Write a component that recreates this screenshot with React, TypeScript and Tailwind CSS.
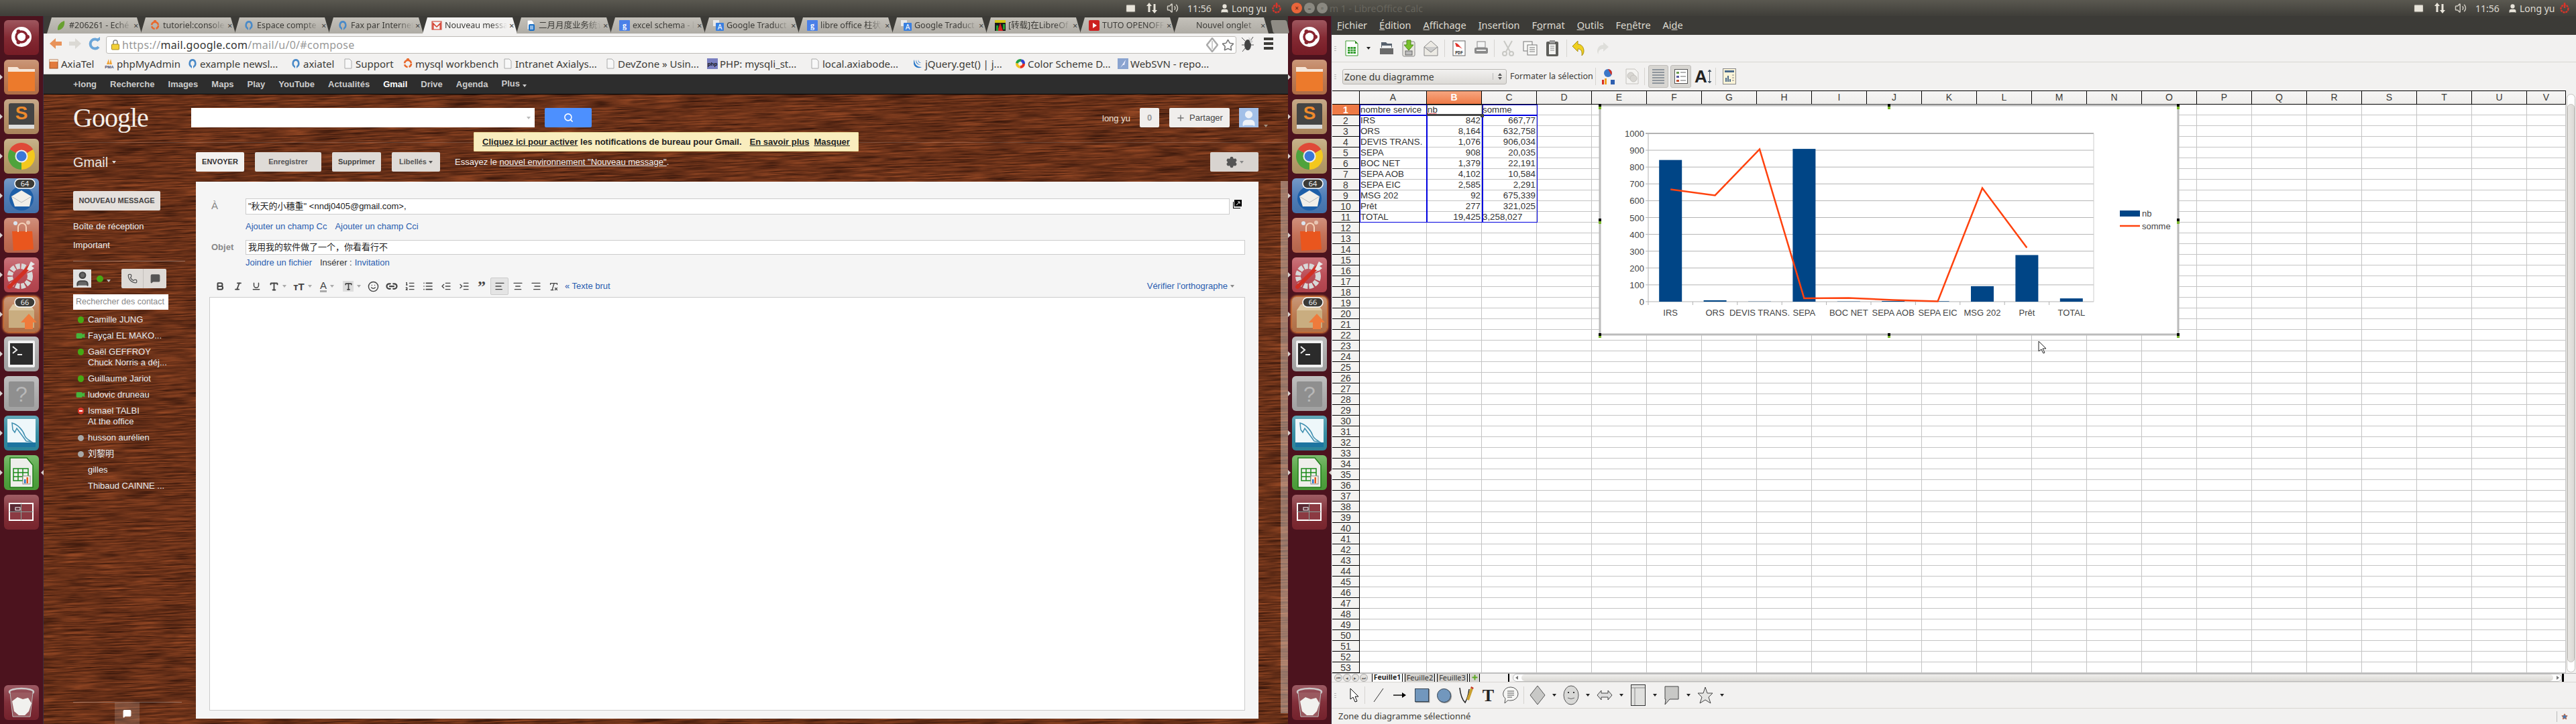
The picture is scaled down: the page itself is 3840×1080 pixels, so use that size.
import type { ReactNode } from "react";
import {
  AlignCenter,
  AlignLeft,
  AlignRight,
  Bold,
  Indent,
  Italic,
  Link2,
  List,
  ListOrdered,
  Mail,
  MessageSquare,
  Outdent,
  Phone,
  Plus,
  RemoveFormatting,
  Search,
  Settings,
  Smile,
  Star,
  Type,
  Underline,
  User,
  Video,
  Volume2,
} from "lucide-react";

const UI_FONT = "font-['Noto_Sans','Noto_Sans_CJK_SC',sans-serif]";
const WEB_FONT = "font-['Liberation_Sans','Noto_Sans_CJK_SC',sans-serif]";

function Caret({ color = "border-t-[#777]" }: { color?: string }) {
  return <span className={`inline-block h-0 w-0 border-x-[3px] border-t-[4px] border-x-transparent ${color}`} />;
}

/* ---------- top panel ---------- */

function Indicators() {
  return (
    <div className="ml-auto flex items-center pr-[8px] text-[14px] text-[#dfdbd2]">
      <Mail size={17} className="mr-[14px] fill-[#e8e4da] stroke-[#55534c]" />
      <svg width="18" height="18" viewBox="0 0 18 18" className="mr-[13px] fill-[#e8e4da]">
        <path d="M5 1 9 6H6.500v9h-3V6H1zM13 17l4-5h-2.500V3h-3v9H9z" />
      </svg>
      <Volume2 size={18} className="mr-[13px] stroke-[#cfcbc2]" />
      <span className="mr-[11px] w-[37px]">11:56</span>
      <User size={15} className="mr-[3px] fill-[#e8e4da] stroke-[#e8e4da]" />
      <span className="w-[58px] whitespace-nowrap">Long yu</span>
      <svg width="18" height="18" viewBox="0 0 18 18" fill="none" className="stroke-[#d8342a]" strokeWidth="2.400">
        <circle cx="9" cy="10" r="5.500" strokeDasharray="3 1" />
        <path d="M9 1v8" />
      </svg>
    </div>
  );
}

function WindowButtons() {
  return (
    <div className="ml-[4px] flex items-center gap-[3px] pl-[1px]">
      <span className="flex h-[16px] w-[16px] items-center justify-center rounded-full bg-[#e9653a] text-[10px] leading-none text-[#5a2010]">×</span>
      <span className="flex h-[16px] w-[16px] items-center justify-center rounded-full bg-[#8a8880] text-[10px] leading-none text-[#3c3b37]">–</span>
      <span className="flex h-[16px] w-[16px] items-center justify-center rounded-full bg-[#8a8880] text-[9px] leading-none text-[#3c3b37]">▫</span>
    </div>
  );
}

function TopPanel() {
  return (
    <div className={`${UI_FONT} flex h-6 bg-gradient-to-b from-[#5a5850] to-[#3f3e39]`}>
      <div className="flex w-[1920px]">
        <Indicators />
      </div>
      <div className="flex w-[1920px] items-center">
        <WindowButtons />
        <span className="ml-[3px] text-[14px] text-[#67655d]">m 1 - LibreOffice Calc</span>
        <Indicators />
      </div>
    </div>
  );
}

/* ---------- launcher ---------- */

function Tile({
  tone,
  pip = false,
  active = false,
  children,
}: {
  tone: string;
  pip?: boolean;
  active?: boolean;
  children: ReactNode;
}) {
  return (
    <div className={`relative h-[52px] w-[52px] shrink-0 rounded-[6px] ${tone}`}>
      <div className="absolute inset-0 rounded-[6px] bg-gradient-to-b from-white/25 via-white/5 to-black/5" />
      {pip && (
        <span className="absolute top-[22px] -left-[6px] h-0 w-0 border-y-[4px] border-l-[4px] border-y-transparent border-l-[#d8d2d0]" />
      )}
      {active && (
        <span className="absolute top-[22px] -right-[7px] h-0 w-0 border-y-[4px] border-r-[4px] border-y-transparent border-r-[#d8d2d0]" />
      )}
      <svg viewBox="0 0 52 52" className="absolute inset-0 h-full w-full">
        {children}
      </svg>
    </div>
  );
}

function Badge({ n }: { n: string }) {
  return (
    <g>
      <rect x="16" y="1" width="30" height="14" rx="7" fill="#3c3b37" stroke="#fff" strokeWidth="1.500" />
      <text x="31" y="12" textAnchor="middle" fontSize="11" fill="#eee" fontFamily="Noto Sans">
        {n}
      </text>
    </g>
  );
}

function Launcher() {
  return (
    <div className={`${UI_FONT} flex h-full w-[65px] shrink-0 flex-col items-center gap-[7px] border-r border-[#3c2a40] bg-[#4c131e] pt-[6px] pb-[6px]`}>
      <Tile tone="bg-[#7e1f29]">
        <circle cx="26" cy="25" r="15" fill="#fff" />
        <circle cx="26" cy="25" r="8" fill="none" stroke="#8a2530" strokeWidth="3.500" />
        <circle cx="35" cy="25" r="3" fill="#8a2530" />
        <circle cx="21.500" cy="17" r="3" fill="#8a2530" />
        <circle cx="21.500" cy="33" r="3" fill="#8a2530" />
      </Tile>
      <Tile tone="bg-[#b9744c]" pip>
        <path d="M6 11h14l3 3h23v33H6z" fill="#f6e6d8" />
        <path d="M6 18h40v29H6z" fill="#ec7a2c" />
      </Tile>
      <Tile tone="bg-[#b38c62]" pip>
        <rect x="7" y="6" width="38" height="38" rx="3" fill="#444" />
        <rect x="7" y="38" width="38" height="6" fill="#ddd" />
        <text x="26" y="30" textAnchor="middle" fontSize="28" fontWeight="700" fill="#ee8a2c" fontFamily="Liberation Sans">
          S
        </text>
      </Tile>
      <Tile tone="bg-[#b59a66]" pip>
        <path d="M8.700 16A20 20 0 0 1 43.300 16L26 26Z" fill="#df4a38" />
        <path d="M43.300 16A20 20 0 0 1 26 46L26 26Z" fill="#f3c81e" />
        <path d="M26 46A20 20 0 0 1 8.700 16L26 26Z" fill="#4ea33c" />
        <circle cx="26" cy="26" r="9.500" fill="#eee" />
        <circle cx="26" cy="26" r="7.500" fill="#3b78d8" />
      </Tile>
      <Tile tone="bg-[#4878b4]" pip>
        <circle cx="26" cy="30" r="18" fill="#1d5fa8" />
        <path d="M11 27 26 18l15 9-3 15H16z" fill="#f1efe9" />
        <path d="M11 27l15 9 15-9" fill="none" stroke="#bbb" />
        <Badge n="64" />
      </Tile>
      <Tile tone="bg-[#c06a50]" pip>
        <path d="M12 20h30l2 27-30 2z" fill="#e9561e" />
        <path d="M21 21v-7a6 6 0 0 1 12 0v7" fill="none" stroke="#f6d2b8" strokeWidth="2" />
        <circle cx="17" cy="8" r="3" fill="#dbe4ef" />
        <circle cx="36" cy="7" r="3" fill="#e8c6b4" />
      </Tile>
      <Tile tone="bg-[#b84650]" pip>
        <circle cx="24" cy="28" r="15" fill="none" stroke="#d8d8d8" strokeWidth="8" strokeDasharray="6 2" />
        <path d="M8 44 38 14" stroke="#d22f22" strokeWidth="6" strokeLinecap="round" />
        <path d="M34 18 40 6l6 4-5 3 4 3-5 4z" fill="#e8e8e8" />
      </Tile>
      <div className="rounded-[7px] shadow-[0_0_3px_2px_#e0803c]">
        <Tile tone="bg-[#b8764c]" pip>
          <path d="M7 20h38v26H7z" fill="#c9ad80" />
          <path d="M7 20 13 11h26l6 9z" fill="#dcc7a2" />
          <path d="M37 25l12 13h-6v10H31V38h-6z" fill="#ef7b3c" />
          <Badge n="66" />
        </Tile>
      </div>
      <Tile tone="bg-[#a8a8a8]" pip>
        <rect x="6" y="6" width="40" height="40" rx="2" fill="#f0f0f0" />
        <rect x="9" y="10" width="34" height="32" fill="#2b2b2b" />
        <path d="M13 15l6 5-6 5" fill="none" stroke="#eee" strokeWidth="2" />
        <path d="M20 27h7" stroke="#eee" strokeWidth="2" />
      </Tile>
      <Tile tone="bg-[#aaaaaa]" pip>
        <rect x="7" y="8" width="38" height="38" rx="2" fill="#8f8f8f" />
        <text x="26" y="38" textAnchor="middle" fontSize="32" fill="#b8b8b8" fontFamily="Liberation Sans">
          ?
        </text>
      </Tile>
      <Tile tone="bg-[#2f8aa0]" pip>
        <rect x="5" y="5" width="42" height="42" fill="#eef7fa" />
        <path d="M12 11c8 2 16 10 19 19 2 5 6 6 10 9l-8-1-5-7-9-12-3 6-3-4z" fill="none" stroke="#3f8fb0" strokeWidth="1.500" />
        <rect x="5" y="40" width="42" height="7" fill="#1d74a0" />
      </Tile>
      <Tile tone="bg-[#4ea33c]" pip active>
        <path d="M9 4h25l9 11v33H9z" fill="#eeeeea" stroke="#207d19" strokeWidth="1.500" />
        <path d="M14 20h22v18H14zM14 26h22M14 32h22M21 20v18M28 20v18" fill="none" stroke="#1a8a1a" strokeWidth="1.500" />
        <rect x="28" y="31" width="11" height="12" fill="#f6f2e8" stroke="#888" />
        <rect x="30" y="36" width="2.500" height="6" fill="#2a78d0" />
        <rect x="33.500" y="33" width="2.500" height="9" fill="#e85a20" />
      </Tile>
      <Tile tone="bg-[#7e2730]">
        <rect x="8" y="13" width="35" height="25" fill="#8b3a42" stroke="#fff" strokeWidth="2" />
        <path d="M25.500 13v25M8 25.500h35" stroke="#89a09a" />
        <rect x="9" y="14" width="16" height="11" fill="#5a2a34" />
        <rect x="17" y="19" width="7" height="4" fill="none" stroke="#fff" />
      </Tile>
      <div className="mt-auto">
        <Tile tone="bg-[#7b2530]">
          <ellipse cx="26" cy="10" rx="18" ry="5" fill="none" stroke="#ccc" strokeWidth="2.500" />
          <path d="M9 11l4 36h26l4-36" fill="#9a5a60" stroke="#bbb" />
          <path d="M12 24l8-6 8 3 8-2 5 8-4 12-6 6h-9l-7-6z" fill="#f1f1ee" />
        </Tile>
      </div>
    </div>
  );
}

/* ---------- chrome ---------- */

type Fav = "leaf" | "ubuntu" | "axia" | "gmail" | "doc" | "google" | "translate" | "bars" | "play" | "none" | "page" | "pma" | "box" | "php" | "jquery" | "color" | "svn";

function Favicon({ kind }: { kind: Fav }) {
  if (kind === "none") return <span className="w-[16px] shrink-0" />;
  return (
    <svg width="16" height="16" viewBox="0 0 16 16" className="shrink-0">
      {kind === "leaf" && <path d="M3 15C2 8 7 3 13 1c1 7-2 13-10 14z" fill="#68a030" />}
      {kind === "ubuntu" && (
        <g fill="none" stroke="#e8682c" strokeWidth="2.500">
          <circle cx="8" cy="8" r="5" strokeDasharray="6 2" />
          <circle cx="8" cy="2" r="1" />
        </g>
      )}
      {kind === "axia" && <path d="M8 1a5.500 6.500 0 0 0-3 12l2 2v-3.500A3 4 0 1 1 9 11.500V15l2-2A5.500 6.500 0 0 0 8 1z" fill="#4a8ac8" />}
      {kind === "gmail" && (
        <g>
          <rect x="1" y="2" width="14" height="12" fill="#f4f4f4" stroke="#cc3322" />
          <path d="M1.500 2.500 8 9l6.500-6.500V14h-2V7L8 11 3.500 7v7h-2z" fill="#d44030" />
        </g>
      )}
      {kind === "doc" && (
        <g>
          <path d="M3 0h7l3 4v10H3z" fill="#fff" stroke="#aaa" />
          <rect x="5" y="6" width="9" height="10" rx="2" fill="#1a6fc4" />
          <path d="M7 9h5M7 11h5M7 13h5" stroke="#fff" />
        </g>
      )}
      {kind === "google" && (
        <g>
          <rect width="16" height="16" rx="1" fill="#4a80e8" />
          <text x="8" y="12" textAnchor="middle" fontSize="12" fontWeight="700" fill="#fff" fontFamily="Liberation Serif">
            g
          </text>
        </g>
      )}
      {kind === "translate" && (
        <g>
          <rect x="0" y="0" width="9" height="9" fill="#e8e8e8" />
          <rect x="4" y="4" width="12" height="12" rx="1" fill="#3a80e0" />
          <text x="10" y="14" textAnchor="middle" fontSize="10" fill="#fff" fontFamily="Liberation Sans">
            A
          </text>
        </g>
      )}
      {kind === "bars" && (
        <g>
          <rect width="16" height="16" fill="#1a1a1a" />
          <path d="M0 0h16v4H0z" fill="#d4c818" />
          <path d="M4 16 8 4l4 12z" fill="#d82020" />
          <path d="M2 8h3v8H2zM12 6h3v8h-3z" fill="#20a030" />
        </g>
      )}
      {kind === "play" && (
        <g>
          <rect width="16" height="16" rx="2" fill="#cc2020" />
          <path d="M6 4l6 4-6 4z" fill="#fff" />
        </g>
      )}
      {kind === "page" && <path d="M3 1h7l3 3v11H3z" fill="#f8f8f8" stroke="#aaa" />}
      {kind === "pma" && (
        <g>
          <path d="M4 9 7 1l1 8zM8 9l2-8 2 8z" fill="#f0a030" />
          <text x="8" y="15" textAnchor="middle" fontSize="6" fontWeight="700" fill="#446" fontFamily="Liberation Sans">
            PMA
          </text>
        </g>
      )}
      {kind === "box" && (
        <g>
          <rect x="2" y="2" width="12" height="13" fill="#e27a3c" stroke="#a05020" />
          <rect x="2" y="2" width="12" height="3" fill="#f4e0c8" />
        </g>
      )}
      {kind === "php" && (
        <g>
          <rect width="16" height="16" fill="#7a7fc0" />
          <text x="8" y="11" textAnchor="middle" fontSize="8" fontWeight="700" fill="#111" fontFamily="Liberation Sans">
            php
          </text>
        </g>
      )}
      {kind === "jquery" && <path d="M3 2c0 6 3 11 11 11-5 3-12 0-12-6 0-2 0-4 1-5zm3 0c0 4 2 7 7 8-5 0-9-3-7-8zm3 0c0 2 1 4 4 5-3 0-5-2-4-5z" fill="#2a78c8" />}
      {kind === "color" && (
        <g fill="none" strokeWidth="4">
          <circle cx="8" cy="8" r="5" stroke="#e83020" strokeDasharray="8 24" />
          <circle cx="8" cy="8" r="5" stroke="#f0c020" strokeDasharray="8 24" strokeDashoffset="-8" />
          <circle cx="8" cy="8" r="5" stroke="#20a040" strokeDasharray="8 24" strokeDashoffset="-16" />
          <circle cx="8" cy="8" r="5" stroke="#3040d0" strokeDasharray="8 24" strokeDashoffset="-24" />
        </g>
      )}
      {kind === "svn" && (
        <g>
          <rect width="16" height="16" fill="#8aa4d0" />
          <path d="M4 14 12 2l-2 8-2 0z" fill="#eef" />
        </g>
      )}
    </svg>
  );
}

const TABS: { title: string; icon: Fav; active?: boolean }[] = [
  { title: "#206261 - Eché", icon: "leaf" },
  { title: "tutoriel:console", icon: "ubuntu" },
  { title: "Espace compte", icon: "axia" },
  { title: "Fax par Internet", icon: "axia" },
  { title: "Nouveau messa", icon: "gmail", active: true },
  { title: "二月月度业务统计", icon: "doc" },
  { title: "excel schema - l", icon: "google" },
  { title: "Google Traduct", icon: "translate" },
  { title: "libre office 柱状", icon: "google" },
  { title: "Google Traduct", icon: "translate" },
  { title: "[转载]在LibreOf", icon: "bars" },
  { title: "TUTO OPENOFF", icon: "play" },
  { title: "Nouvel onglet", icon: "none" },
];

const BOOKMARKS: { label: string; icon: Fav; width: string }[] = [
  { label: "AxiaTel", icon: "box", width: "w-[83px]" },
  { label: "phpMyAdmin", icon: "pma", width: "w-[124px]" },
  { label: "example newsl...", icon: "axia", width: "w-[154px]" },
  { label: "axiatel", icon: "axia", width: "w-[78px]" },
  { label: "Support", icon: "page", width: "w-[89px]" },
  { label: "mysql workbench", icon: "ubuntu", width: "w-[149px]" },
  { label: "Intranet Axialys...", icon: "page", width: "w-[153px]" },
  { label: "DevZone » Usin...", icon: "page", width: "w-[152px]" },
  { label: "PHP: mysqli_st...", icon: "php", width: "w-[153px]" },
  { label: "local.axiabode...", icon: "page", width: "w-[153px]" },
  { label: "jQuery.get() | j...", icon: "jquery", width: "w-[153px]" },
  { label: "Color Scheme D...", icon: "color", width: "w-[153px]" },
  { label: "WebSVN - repo...", icon: "svn", width: "w-[153px]" },
];

const NAV = ["+long", "Recherche", "Images", "Maps", "Play", "YouTube", "Actualités", "Gmail", "Drive", "Agenda", "Plus"];

function ChromeBars() {
  return (
    <div className={UI_FONT}>
      <div className="flex h-[26px] items-end bg-[#3c3b37] pl-[5px]">
        {TABS.map((t, i) => (
          <div
            key={i}
            className={`flex h-[24px] w-[141px] shrink-0 -mr-[1px] items-center pl-[13px] [clip-path:polygon(7px_0,calc(100%-7px)_0,100%_100%,0_100%)] ${
              t.active ? "bg-[#f2f1f0]" : "bg-gradient-to-b from-[#c4c1ba] to-[#aeaba4]"
            }`}
          >
            <Favicon kind={t.icon} />
            <span className="ml-[4px] w-[93px] shrink-0 text-[12.5px] leading-[24px] whitespace-nowrap text-[#3c3b37] [mask-image:linear-gradient(to_right,#000_75%,transparent)]">
              {t.title}
            </span>
            <span className="ml-[3px] text-[13px] leading-none text-[#444]">×</span>
          </div>
        ))}
        <div className="ml-[6px] h-[20px] w-[24px] skew-x-12 rounded-[3px] bg-[#8f8c85]" />
      </div>
      <div className="flex h-[30px] items-center bg-[#f2f1f0]">
        <svg width="20" height="18" viewBox="0 0 20 18" className="ml-[8px]">
          <path d="M10 1 1 9l9 8v-5h9V6h-9z" fill="#e8935a" />
        </svg>
        <svg width="20" height="18" viewBox="0 0 20 18" className="ml-[9px]">
          <path d="M10 1l9 8-9 8v-5H1V6h9z" fill="#dbd9d4" />
        </svg>
        <svg width="18" height="20" viewBox="0 0 18 20" fill="none" className="ml-[10px]">
          <path d="M15 6a7 7 0 1 0 0 9" stroke="#6ca6d8" strokeWidth="4" />
          <path d="M10 5h7V0z" fill="#6ca6d8" />
        </svg>
        <div className="mt-[4px] ml-[8px] flex h-[26px] w-[1685px] items-center rounded-[3px] border border-[#bdbbb6] bg-white">
          <svg width="14" height="16" viewBox="0 0 14 16" className="ml-[6px]">
            <path d="M4 7V4a3 3 0 0 1 6 0v3" fill="none" stroke="#888" strokeWidth="1.500" />
            <rect x="1.500" y="7" width="11" height="8" rx="1" fill="#f2d038" stroke="#a58a20" />
          </svg>
          <span className="ml-[3px] text-[16px] tracking-[0.3px] text-[#999]">
            https://<span className="text-[#333]">mail.google.com</span>/mail/u/0/#compose
          </span>
          <svg width="18" height="22" viewBox="0 0 18 22" className="mr-[5px] ml-auto">
            <path d="M9 1l8 10-8 10-8-10z" fill="none" stroke="#aaa" strokeWidth="2.500" />
            <path d="M9 5v12" stroke="#ccc" strokeWidth="2" />
          </svg>
          <Star size={19} className="mr-[2px] stroke-[#777]" />
        </div>
        <svg width="22" height="26" viewBox="0 0 22 26" className="ml-[7px]">
          <ellipse cx="10" cy="15" rx="5" ry="8" fill="#444" />
          <path d="M6 9 1 4M6 15H1M6 20l-4 5M14 9l4-6M15 15h4" stroke="#555" />
          <path d="M11 3l7 7-4 3z" fill="#cfcfcf" />
        </svg>
        <div className="ml-[12px] flex w-[14px] flex-col gap-[3px]">
          <span className="h-[4px] bg-[#3c3b37]" />
          <span className="h-[4px] bg-[#3c3b37]" />
          <span className="h-[4px] bg-[#3c3b37]" />
        </div>
      </div>
      <div className="flex h-[31px] items-center border-b border-[#cfcdc9] bg-[#f2f1f0] pl-[7px]">
        {BOOKMARKS.map((b) => (
          <div key={b.label} className={`flex items-center gap-[3px] ${b.width} shrink-0 whitespace-nowrap text-[15px] text-[#3c3b37]`}>
            <Favicon kind={b.icon} />
            <span>{b.label}</span>
          </div>
        ))}
      </div>
      <div className={`${WEB_FONT} flex h-[30px] items-center gap-[20px] border-b border-black bg-[#2d2d2d] pl-[44px] text-[13px] font-bold text-[#cccccc]`}>
        {NAV.map((n) => (
          <span key={n} className={n === "Gmail" ? "text-white" : undefined}>
            {n}
            {n === "Plus" && <span className="ml-[4px] inline-block align-middle"><Caret color="border-t-[#ccc]" /></span>}
          </span>
        ))}
      </div>
    </div>
  );
}

/* ---------- gmail ---------- */

const CONTACTS: { name: string; status: "on" | "video" | "busy" | "off" | "none"; sub?: string }[] = [
  { name: "Camille JUNG", status: "on" },
  { name: "Fayçal EL MAKO...", status: "video" },
  { name: "Gaël GEFFROY", status: "on", sub: "Chuck Norris a déj..." },
  { name: "Guillaume Jariot", status: "on" },
  { name: "ludovic druneau", status: "video" },
  { name: "Ismael TALBI", status: "busy", sub: "At the office" },
  { name: "husson aurélien", status: "off" },
  { name: "刘黎明", status: "off" },
  { name: "gilles", status: "none" },
  { name: "Thibaud CAINNE ...", status: "none" },
];

function ContactRow({ name, status, sub }: (typeof CONTACTS)[number]) {
  return (
    <div className="flex">
      <span className="flex h-[24px] w-[22px] shrink-0 items-center justify-center">
        {status === "on" && <span className="h-[10px] w-[9px] rounded-full bg-[#46a814]" />}
        {status === "video" && <Video size={14} className="fill-[#46b43c] stroke-[#46b43c]" />}
        {status === "busy" && (
          <span className="flex h-[10px] w-[9px] items-center justify-center rounded-full bg-[#d83a2c]">
            <span className="h-[2px] w-[5px] bg-white" />
          </span>
        )}
        {status === "off" && <span className="h-[9px] w-[9px] rounded-full bg-[#a8a8a8]" />}
      </span>
      <div className="text-[13px] leading-[16px] whitespace-nowrap text-[#e8ecef]">
        <div className="flex h-[24px] items-center">{name}</div>
        {sub && <div className="-mt-[4px] mb-[4px]">{sub}</div>}
      </div>
    </div>
  );
}

function Sidebar() {
  return (
    <div className="w-[183px] shrink-0 pt-[14px]">
      <div className="flex h-[29px] w-[130px] items-center justify-center rounded-[2px] bg-[#e4e0dc] text-[11px] font-bold text-[#444]">
        NOUVEAU MESSAGE
      </div>
      <div className="mt-[14px] flex h-[20px] items-center text-[13px] text-[#eee]">Boîte de réception</div>
      <div className="mt-[8px] flex h-[20px] items-center text-[13px] text-[#eee]">Important</div>
      <div className="mt-[13px] h-px w-[167px] bg-white/30" />
      <div className="mt-[11px] flex items-center">
        <div className="flex h-[27px] w-[27px] items-end justify-center overflow-hidden bg-[#e2e2e2]">
          <User size={26} className="fill-[#666] stroke-[#444]" />
        </div>
        <span className="ml-[8px] h-[10px] w-[10px] rounded-full bg-[#46a814]" />
        <span className="ml-[5px]"><Caret color="border-t-[#bbb]" /></span>
        <div className="ml-[16px] flex h-[29px] w-[67px] rounded-[2px] bg-[#dedad6]">
          <span className="flex w-[33px] items-center justify-center border-r border-[#c4c0bc]">
            <Phone size={15} className="stroke-[#555]" />
          </span>
          <span className="flex flex-1 items-center justify-center">
            <MessageSquare size={15} className="fill-[#555] stroke-[#555]" />
          </span>
        </div>
      </div>
      <div className="mt-[9px] h-[23px] w-[142px] bg-white pl-[4px] text-[12.5px] leading-[23px] whitespace-nowrap text-[#888]">
        Rechercher des contact
      </div>
      <div className="mt-[3px]">
        {CONTACTS.map((c) => (
          <ContactRow key={c.name} {...c} />
        ))}
      </div>
    </div>
  );
}

const RTE: { icon: ReactNode; w: string; caret?: boolean; boxed?: boolean }[] = [
  { icon: <Bold size={14} strokeWidth={3.5} />, w: "w-[27px]" },
  { icon: <Italic size={14} strokeWidth={3} />, w: "w-[27px]" },
  { icon: <Underline size={14} strokeWidth={2.5} />, w: "w-[27px]" },
  { icon: <Type size={15} strokeWidth={3} />, w: "w-[38px]", caret: true },
  { icon: <span className="text-[15px] leading-none font-bold">тT</span>, w: "w-[36px]", caret: true },
  { icon: <span className="border-b-[3px] border-[#aaa] text-[15px] leading-[14px]">A</span>, w: "w-[37px]", caret: true },
  { icon: <span className="flex h-[16px] w-[16px] items-center justify-center bg-[#ddd]"><Type size={13} strokeWidth={3} /></span>, w: "w-[37px]", caret: true },
  { icon: <Smile size={17} strokeWidth={2} />, w: "w-[27px]" },
  { icon: <Link2 size={18} strokeWidth={3} />, w: "w-[27px]" },
  { icon: <ListOrdered size={16} />, w: "w-[27px]" },
  { icon: <List size={16} strokeWidth={2.5} />, w: "w-[27px]" },
  { icon: <Outdent size={16} />, w: "w-[27px]" },
  { icon: <Indent size={16} />, w: "w-[27px]" },
  { icon: <span className="font-['Liberation_Serif',serif] text-[24px] leading-[30px] font-bold">”</span>, w: "w-[26px]" },
  { icon: <AlignLeft size={16} />, w: "w-[27px]", boxed: true },
  { icon: <AlignCenter size={16} />, w: "w-[27px]" },
  { icon: <AlignRight size={16} />, w: "w-[27px]" },
  { icon: <RemoveFormatting size={15} />, w: "w-[27px]" },
];

function Compose() {
  return (
    <div className="flex h-[801px] w-[1584px] flex-col bg-[#f5f5f5] px-[20px] pt-[25px] pb-[12px] text-[13px] text-[#333]">
      <div className="flex">
        <span className="ml-[3px] w-[51px] text-[15px] text-[#888]">À</span>
        <div className="flex h-[24px] w-[1467px] items-center border border-[#ccc] bg-white pl-[3px] text-[13px] text-[#222]">
          "秋天的小穗重" &lt;nndj0405@gmail.com&gt;,
        </div>
        <svg width="13" height="13" viewBox="0 0 13 13" className="mt-[2px] ml-[5px] fill-black">
          <path d="M2 0h11v10H2zM0 3h1v9h10v1H0z" />
          <path d="M5 8l5-5M7 3h3v3" stroke="#fff" fill="none" />
        </svg>
      </div>
      <div className="mt-[8px] ml-[54px] flex h-[20px] items-center gap-[12px] text-[#2a5db0]">
        <span>Ajouter un champ Cc</span>
        <span>Ajouter un champ Cci</span>
      </div>
      <div className="mt-[10px] flex">
        <span className="ml-[3px] flex w-[51px] items-center text-[13px] font-bold text-[#888]">Objet</span>
        <div className="flex h-[22px] w-[1490px] items-center border border-[#ccc] bg-white pl-[3px] text-[13px] text-[#222]">
          我用我的软件做了一个，你看看行不
        </div>
      </div>
      <div className="mt-[2px] ml-[54px] flex h-[20px] items-center">
        <span className="text-[#2a5db0]">Joindre un fichier</span>
        <span className="ml-[12px]">Insérer :</span>
        <span className="ml-[4px] text-[#2a5db0]">Invitation</span>
      </div>
      <div className="mt-[12px] flex h-[29px] items-center pb-[3px] pl-[2px] text-[#444]">
        {RTE.map((r, i) => (
          <span key={i} className={`flex h-[26px] shrink-0 items-center justify-center gap-[5px] rounded-[2px] ${r.w} ${r.boxed ? "border border-[#ccc] bg-[#e4e4e4]" : ""}`}>
            {r.icon}
            {r.caret && <Caret color="border-t-[#aaa]" />}
          </span>
        ))}
        <span className="ml-[3px] text-[#2a5db0]">« Texte brut</span>
        <span className="ml-auto mr-[16px] flex items-center gap-[4px] text-[#2a5db0]">
          Vérifier l'orthographe <Caret color="border-t-[#888]" />
        </span>
      </div>
      <div className="min-h-0 flex-1 border border-[#ccc] bg-white" />
    </div>
  );
}

function GmailPage() {
  return (
    <div className={`${WEB_FONT} relative min-h-0 flex-1 overflow-hidden bg-[#5a3018] pl-[44px]`}>
      <svg className="absolute inset-0 h-full w-full" aria-hidden>
        <filter id="wood" x="0" y="0" width="100%" height="100%" colorInterpolationFilters="sRGB">
          <feTurbulence type="fractalNoise" baseFrequency="0.02 0.5" numOctaves="3" seed="11" result="grain" />
          <feTurbulence type="fractalNoise" baseFrequency="0.004 0.05" numOctaves="2" seed="4" result="bands" />
          <feComposite in="grain" in2="bands" operator="arithmetic" k2="0.85" k3="0.15" />
          <feColorMatrix values=".68 0 0 0 .07  .36 0 0 0 .01  .18 0 0 0 .005  0 0 0 0 1" />
        </filter>
        <g transform="rotate(-2)">
          <rect x="-60" y="-60" width="2000" height="1120" filter="url(#wood)" />
        </g>
      </svg>
      {/* hairline in the theme image */}
      <div className="absolute top-[71px] right-0 left-0 h-px bg-white/15" />
      {/* page scrollbar */}
      <div className="absolute top-[129px] right-0 h-[794px] w-[11px] bg-white/35" />

      <div className="relative flex h-[49px] items-start pt-[20px]">
        <div className="flex h-[29px] w-[176px] items-center font-['Liberation_Serif',serif] text-[40px] leading-none tracking-tight text-[#f4f0ea]">
          Google
        </div>
        <div className="flex h-[29px] w-[512px] items-center justify-end bg-white pr-[6px]">
          <Caret color="border-t-[#bbb]" />
        </div>
        <div className="ml-[15px] flex h-[29px] w-[70px] items-center justify-center rounded-[2px] bg-[#4d90fe]">
          <Search size={15} strokeWidth={2.5} className="stroke-white" />
        </div>
        <span className="mt-[6px] ml-[761px] w-[56px] text-[13px] text-[#e8e0d8]">long yu</span>
        <div className="flex h-[29px] w-[29px] items-center justify-center rounded-[2px] bg-[#f0eeec] text-[13px] font-bold text-[#999]">0</div>
        <div className="ml-[15px] flex h-[29px] w-[90px] items-center justify-center gap-[6px] rounded-[2px] bg-[#f0eeec] text-[13px] text-[#444]">
          <Plus size={14} strokeWidth={2.5} className="stroke-[#777]" />
          Partager
        </div>
        <div className="ml-[14px] flex h-[29px] w-[29px] items-end justify-center overflow-hidden bg-[#a3c0e8]">
          <User size={27} className="fill-[#eef2f8] stroke-[#eef2f8]" />
        </div>
        <span className="mt-[12px] ml-[8px]"><Caret color="border-t-[#a09080]" /></span>
      </div>

      <div className="absolute top-[56px] left-[641px] flex h-[29px] w-[574px] items-center justify-center gap-[12px] rounded-[1px] border border-[#e8d898] bg-[#f9edbe] text-[13px] font-bold text-[#222]">
        <span>
          <u>Cliquez ici pour activer</u> les notifications de bureau pour Gmail.
        </span>
        <u>En savoir plus</u>
        <u className="-ml-[5px]">Masquer</u>
      </div>

      <div className="relative mt-[37px] flex h-[29px] items-center">
        <div className="flex w-[183px] items-center gap-[6px] text-[20px] text-[#e8e4e0]">
          Gmail <Caret color="border-t-[#ddd]" />
        </div>
        <div className="flex h-[29px] w-[72px] items-center justify-center rounded-[2px] bg-[#f3f1ef] text-[11px] font-bold text-[#333]">ENVOYER</div>
        <div className="ml-[16px] flex h-[29px] w-[99px] items-center justify-center rounded-[2px] bg-[#dfdbd7] text-[11px] font-bold text-[#555]">Enregistrer</div>
        <div className="ml-[16px] flex h-[29px] w-[73px] items-center justify-center rounded-[2px] bg-[#dfdbd7] text-[11px] font-bold text-[#444]">Supprimer</div>
        <div className="ml-[16px] flex h-[29px] w-[72px] items-center justify-center gap-[3px] rounded-[2px] bg-[#dfdbd7] text-[11px] font-bold text-[#555]">
          Libellés <Caret color="border-t-[#555]" />
        </div>
        <span className="ml-[22px] w-[313px] text-[13px] whitespace-nowrap text-[#eee]">
          Essayez le <u>nouvel environnement "Nouveau message"</u>.
        </span>
        <div className="ml-[813px] flex h-[29px] w-[72px] items-center justify-center gap-[3px] rounded-[2px] bg-[#d8d4d0]">
          <Settings size={18} className="fill-[#555] stroke-[#555]" />
          <Caret color="border-t-[#888]" />
        </div>
      </div>

      <div className="relative mt-[15px] flex">
        <Sidebar />
        <Compose />
      </div>

      <div className="absolute bottom-0 left-[44px] h-[33px] w-[162px] border-t border-white/30">
        <div className="ml-[62px] flex h-full w-[37px] items-center justify-center bg-white/15">
          <MessageSquare size={13} className="fill-white stroke-white" />
        </div>
      </div>
    </div>
  );
}

/* ---------- calc ---------- */

function Tool({ w, children }: { w: string; children?: ReactNode }) {
  return <div className={`flex h-full shrink-0 items-center justify-center ${w}`}>{children}</div>;
}

function Sep() {
  return <span className="h-[26px] w-px bg-[#d6d4d0]" />;
}

function Handle() {
  return (
    <div className="flex flex-col gap-[2px]">
      <span className="h-[1px] w-[3px] bg-[#bbb]" />
      <span className="h-[1px] w-[3px] bg-[#bbb]" />
      <span className="h-[1px] w-[3px] bg-[#bbb]" />
    </div>
  );
}

function MainToolbar() {
  return (
    <div className="flex h-[41px] items-center border-b border-[#d8d6d2] bg-[#f2f1f0] pl-[4px]">
      <Handle />
      <span className="w-[8px] shrink-0" />
      <Tool w="w-[30px]">
        <svg width="20" height="24" viewBox="0 0 20 24">
          <path d="M1 1h14l4 4v18H1z" fill="#fff" stroke="#3f9a30" />
          <path d="M15 1l4 4h-4z" fill="#2f8a20" />
          <rect x="4" y="10" width="12" height="10" fill="#2f9a2a" />
          <path d="M4 13.300h12M4 16.600h12M8 10v10M12 10v10" stroke="#fff" strokeWidth=".8" />
        </svg>
      </Tool>
      <Tool w="w-[20px]"><Caret color="border-t-[#222]" /></Tool>
      <Tool w="w-[33px]">
        <svg width="22" height="22" viewBox="0 0 22 22">
          <path d="M3 2h7l2 2h7v6H3z" fill="#56606c" />
          <rect x="4" y="7" width="14" height="4" fill="#eee" />
          <path d="M1 11h20v9H1z" fill="#6a6a6a" />
        </svg>
      </Tool>
      <Tool w="w-[33px]">
        <svg width="20" height="26" viewBox="0 0 20 26">
          <rect x="1" y="3" width="18" height="22" rx="2" fill="#e8e6e0" stroke="#888" />
          <rect x="5" y="17" width="10" height="6" fill="#bbb" stroke="#666" />
          <path d="M7 1h6v7h4l-7 8-7-8h4z" fill="#79c02c" stroke="#4a8a18" />
        </svg>
      </Tool>
      <Tool w="w-[33px]">
        <svg width="22" height="24" viewBox="0 0 22 24">
          <path d="M1 10 11 1l10 9v13H1z" fill="#eceae4" stroke="#888" />
          <path d="M1 10l10 8 10-8" fill="#ccc" stroke="#888" />
        </svg>
      </Tool>
      <Tool w="w-[9px]"><Sep /></Tool>
      <Tool w="w-[33px]">
        <svg width="20" height="24" viewBox="0 0 20 24">
          <rect x="1" y="1" width="18" height="22" fill="#fff" stroke="#666" />
          <path d="M4 4c4 0 7 5 11 9-4-3-7-4-9-3z" fill="#e23028" />
          <text x="10" y="21" textAnchor="middle" fontSize="6.500" fontWeight="700" fill="#333" fontFamily="Liberation Mono">PDF</text>
        </svg>
      </Tool>
      <Tool w="w-[33px]">
        <svg width="22" height="22" viewBox="0 0 22 22">
          <rect x="5" y="1" width="12" height="9" fill="#f4f4f4" stroke="#888" />
          <rect x="1" y="10" width="20" height="9" rx="2" fill="#8a8a8a" />
          <rect x="4" y="13" width="14" height="2" fill="#eee" />
        </svg>
      </Tool>
      <Tool w="w-[7px]"><Sep /></Tool>
      <Tool w="w-[33px]">
        <svg width="18" height="24" viewBox="0 0 18 24" fill="none" stroke="#c8c8c4" strokeWidth="2">
          <path d="M3 1l9 16M15 1 6 17" />
          <circle cx="4" cy="20" r="3" />
          <circle cx="14" cy="20" r="3" />
        </svg>
      </Tool>
      <Tool w="w-[33px]">
        <svg width="22" height="22" viewBox="0 0 22 22" fill="#f8f8f6" stroke="#777">
          <rect x="1" y="1" width="13" height="14" />
          <rect x="7" y="6" width="14" height="15" />
          <path d="M10 10h8M10 13h8M10 16h8" />
        </svg>
      </Tool>
      <Tool w="w-[33px]">
        <svg width="20" height="26" viewBox="0 0 20 26">
          <rect x="1" y="3" width="18" height="22" rx="2" fill="#5e5e5a" />
          <rect x="6" y="1" width="8" height="5" fill="#999" />
          <path d="M5 7h10v15H5z" fill="#f4f4f2" />
          <path d="M7 10h6M7 13h6M7 16h6" stroke="#888" />
        </svg>
      </Tool>
      <Tool w="w-[10px]"><Sep /></Tool>
      <Tool w="w-[26px]">
        <svg width="20" height="24" viewBox="0 0 20 24">
          <path d="M1 9 9 1v5c6 0 9 5 9 10 0 3-1 5-3 7 1-8-2-10-6-10v4z" fill="#f0d020" stroke="#a89018" />
        </svg>
      </Tool>
      <Tool w="w-[46px]">
        <svg width="20" height="20" viewBox="0 0 20 20">
          <path d="M19 8 11 1v4C5 5 2 10 2 14c0 2 .5 3 1.500 5 0-6 3-8 7.500-8v4z" fill="#dededa" />
        </svg>
      </Tool>
    </div>
  );
}

function FormatToolbar() {
  return (
    <div className="flex h-[42px] items-center bg-[#f2f1f0] pl-[4px]">
      <Handle />
      <div className="ml-[9px] flex h-[23px] w-[245px] shrink-0 items-center rounded-[3px] border border-[#b8b6b2] bg-gradient-to-b from-[#f2f1f0] to-[#dcdad6] pl-[2px] text-[14px] text-[#3c3b37]">
        Zone du diagramme
        <span className="ml-auto flex w-[20px] flex-col items-center gap-[2px] border-l border-[#bbb]">
          <span className="h-0 w-0 border-x-[3px] border-b-[4px] border-x-transparent border-b-[#555]" />
          <Caret color="border-t-[#555]" />
        </span>
      </div>
      <span className="ml-[5px] w-[127px] shrink-0 text-[12.5px] whitespace-nowrap text-[#3c3b37]">Formater la sélection</span>
      <Sep />
      <Tool w="w-[36px]">
        <svg width="22" height="26" viewBox="0 0 22 26">
          <circle cx="11" cy="8" r="6" fill="#3b78c8" />
          <path d="M11 2a6 6 0 0 1 5 9z" fill="#d83020" />
          <rect x="2" y="18" width="3" height="7" fill="#d83020" />
          <rect x="6" y="16" width="3" height="9" fill="#f0a020" />
          <rect x="15" y="18" width="6" height="7" fill="#3060b0" />
        </svg>
      </Tool>
      <Tool w="w-[36px]">
        <svg width="20" height="24" viewBox="0 0 20 24" fill="#d8d6d2" stroke="#c4c2be">
          <path d="M1 1h13l5 5v17H1z" fill="#f4f3f1" />
          <circle cx="8" cy="11" r="5" />
          <circle cx="12" cy="15" r="5" />
        </svg>
      </Tool>
      <Sep />
      <div className="ml-[5px] flex h-[34px] w-[30px] shrink-0 items-center justify-center rounded-[3px] border border-[#c0bebb] bg-[#d8d6d2]">
        <svg width="20" height="22" viewBox="0 0 20 22" stroke="#456">
          <path d="M1 1h18M1 5h18M1 9h18M1 13h18M1 17h18M1 21h18" />
        </svg>
      </div>
      <div className="ml-[3px] flex h-[34px] w-[31px] shrink-0 items-center justify-center rounded-[3px] border border-[#c0bebb] bg-[#d8d6d2]">
        <svg width="20" height="22" viewBox="0 0 20 22">
          <rect x=".5" y=".5" width="19" height="21" fill="#fff" stroke="#555" />
          <rect x="3" y="4" width="4" height="3" fill="#6a9a50" />
          <rect x="3" y="10" width="4" height="3" fill="#5a5aa0" />
          <rect x="3" y="16" width="4" height="3" fill="#c05030" />
          <path d="M9 5h8M9 11h8M9 17h8" stroke="#666" />
        </svg>
      </div>
      <Tool w="w-[36px]">
        <span className="font-['Liberation_Sans',sans-serif] text-[26px] leading-none font-bold text-[#222]">A</span>
        <svg width="7" height="22" viewBox="0 0 7 22" stroke="#456" fill="#456"><path d="M3.500 1v20M1 4l2.500-3L6 4M1 18l2.500 3L6 18" /></svg>
      </Tool>
      <Sep />
      <Tool w="w-[40px]">
        <svg width="20" height="24" viewBox="0 0 20 24">
          <rect x=".5" y=".5" width="19" height="23" fill="#fbf4d8" stroke="#888" />
          <rect x="3" y="3" width="14" height="3" fill="#4a6a8a" />
          <path d="M5 20v-6M8 20v-9M11 20v-4" stroke="#4a6a8a" strokeWidth="2" />
          <path d="M14 10h3M14 14h3M14 18h3" stroke="#888" />
        </svg>
      </Tool>
    </div>
  );
}

const COLS = ["A", "B", "C", "D", "E", "F", "G", "H", "I", "J", "K", "L", "M", "N", "O", "P", "Q", "R", "S", "T", "U", "V"];

const SHEET: string[][] = [
  ["nombre service", "nb", "somme"],
  ["IRS", "842", "667,77"],
  ["ORS", "8,164", "632,758"],
  ["DEVIS TRANS.", "1,076", "906,034"],
  ["SEPA", "908", "20,035"],
  ["BOC NET", "1,379", "22,191"],
  ["SEPA AOB", "4,102", "10,584"],
  ["SEPA EIC", "2,585", "2,291"],
  ["MSG 202", "92", "675,339"],
  ["Prêt", "277", "321,025"],
  ["TOTAL", "19,425", "3,258,027"],
];

const CELL_BASE = "h-4 overflow-visible border-r border-b border-[#c4c4c4] bg-white px-[1px] text-[13.33px] leading-[15px] whitespace-nowrap text-[#333]";

function SheetCell({ row, col }: { row: number; col: number }) {
  const text = SHEET[row]?.[col];
  const numeric = row > 0 && (col === 1 || (col === 2 && row < 10));
  return (
    <div className={`${CELL_BASE} ${numeric ? "text-right" : ""}`}>
      {row === 0 && col === 1 ? <span className="underline decoration-red-600 decoration-dotted">{text}</span> : text}
    </div>
  );
}

function Sheet() {
  const rows = Array.from({ length: 53 }, (_, i) => i);
  return (
    <div className="grid grid-cols-[41px_100px_repeat(20,82px)_58px] grid-rows-[21px] auto-rows-[16px]">
      <div className="border-t border-r border-b border-black bg-[#f4f3f1]" />
      {COLS.map((c) => (
        <div
          key={c}
          className={`flex items-center justify-center border-t border-r border-b border-black text-[14px] ${
            c === "B" ? "bg-gradient-to-b from-[#f6a680] to-[#ee7a46] font-bold text-white" : "bg-gradient-to-b from-[#f7f6f5] to-[#eeedeb] text-[#3c3b37]"
          }`}
        >
          {c}
        </div>
      ))}
      {rows.map((r) => (
        <div key={r} className="contents">
          <div
            className={`flex h-4 items-center justify-center border-r border-b border-black text-[14px] leading-none ${
              r === 0 ? "bg-[#ee7a46] font-bold text-white" : "bg-[#f4f3f1] text-[#3c3b37]"
            }`}
          >
            {r + 1}
          </div>
          {COLS.map((_, c) => (
            <SheetCell key={c} row={r} col={c} />
          ))}
        </div>
      ))}
    </div>
  );
}

const CATEGORIES = ["IRS", "ORS", "DEVIS TRANS.", "SEPA", "BOC NET", "SEPA AOB", "SEPA EIC", "MSG 202", "Prêt", "TOTAL"];
const NB = [842, 8.2, 1.1, 908, 1.4, 4.1, 2.6, 92, 277, 19.4];
const SOMME = [667, 632, 906, 20, 22, 10, 2, 675, 321];

const PLOT = { x: 2457, y: 199, w: 664, h: 251 };
const catX = (i: number) => PLOT.x + (PLOT.w / 10) * (i + 0.5);
const valY = (v: number) => PLOT.y + PLOT.h - (v / 1000) * PLOT.h;

function Chart() {
  const corners: [number, number][] = [
    [2385, 157], [2816, 157], [3247, 157],
    [2385, 328], [3247, 328],
    [2385, 499], [2816, 499], [3247, 499],
  ];
  return (
    <svg viewBox="2380 152 872 352" className="absolute top-[17px] left-[395px] h-[352px] w-[872px]">
      <rect x="2385" y="157" width="862" height="342" fill="#fff" stroke="#bbb" strokeWidth="3" />
      {Array.from({ length: 11 }, (_, i) => (
        <g key={i}>
          <line x1={PLOT.x - 4} x2={PLOT.x + PLOT.w} y1={valY(i * 100)} y2={valY(i * 100)} stroke="#b3b3b3" strokeWidth={i === 10 ? 2 : 1} />
          <text x={PLOT.x - 6} y={valY(i * 100) + 5} textAnchor="end" fontSize="13" fill="#444" fontFamily="Liberation Sans">
            {i * 100}
          </text>
        </g>
      ))}
      <line x1={PLOT.x} x2={PLOT.x} y1={PLOT.y} y2={PLOT.y + PLOT.h} stroke="#b3b3b3" />
      <line x1={PLOT.x + PLOT.w} x2={PLOT.x + PLOT.w} y1={PLOT.y} y2={PLOT.y + PLOT.h} stroke="#ccc" />
      {CATEGORIES.map((c, i) => (
        <g key={c}>
          <line x1={PLOT.x + (PLOT.w / 10) * i} x2={PLOT.x + (PLOT.w / 10) * i} y1={PLOT.y + PLOT.h} y2={PLOT.y + PLOT.h + 5} stroke="#b3b3b3" />
          <rect x={catX(i) - 17} y={valY(NB[i])} width="34" height={PLOT.y + PLOT.h - valY(NB[i])} fill="#004586" />
          <text x={catX(i)} y="471" textAnchor="middle" fontSize="13" fill="#444" fontFamily="Liberation Sans">
            {c}
          </text>
        </g>
      ))}
      <polyline points={SOMME.map((v, i) => `${catX(i)},${valY(v)}`).join(" ")} fill="none" stroke="#ff420e" strokeWidth="2.500" />
      <rect x="3160" y="314" width="30" height="9" fill="#004586" />
      <text x="3193" y="323" fontSize="13" fill="#444" fontFamily="Liberation Sans">nb</text>
      <line x1="3160" x2="3190" y1="337" y2="337" stroke="#ff420e" strokeWidth="2.500" />
      <text x="3193" y="342" fontSize="13" fill="#444" fontFamily="Liberation Sans">somme</text>
      {corners.map(([x, y]) => (
        <g key={`${x}-${y}`}>
          <rect x={x - 2} y={y - 2} width="4" height="4" fill="#000" />
          <rect x={x - 2} y={y + 2} width="4" height="4" fill="#7ab82c" />
        </g>
      ))}
    </svg>
  );
}

function Scrollbars() {
  return (
    <div className="relative h-full w-[15px] shrink-0 bg-[#f2f1f0]">
      <div className="absolute top-[5px] right-[1px] bottom-[1px] left-[1px] rounded-full border border-[#c4c2be] bg-white">
        <div className="mt-[14px] h-[calc(100%-28px)] rounded-full border border-[#c4c2be] bg-gradient-to-r from-[#e8e6e3] to-[#dcdad6]" />
      </div>
    </div>
  );
}

function SheetTabs() {
  return (
    <div className="flex h-[13px] items-center border-t border-[#bbb] bg-[#f2f1f0] pl-[4px] text-[11px] leading-none">
      <div className="flex w-[50px] gap-[1px]">
        {["⏮", "◂", "▸", "⏭"].map((g) => (
          <span key={g} className="flex h-[12px] w-[12px] items-center justify-center rounded-full border border-[#aaa] bg-[#e4e2de] text-[7px] text-[#555]">
            {g}
          </span>
        ))}
      </div>
      <span className="ml-[6px] flex h-[13px] w-[46px] items-center justify-center border-x border-b border-black bg-white text-[10.5px] font-bold text-[#222]">Feuille1</span>
      <span className="ml-[3px] flex h-[13px] w-[45px] items-center justify-center border-x border-b border-black bg-[#d4d2ce] text-[#333]">Feuille2</span>
      <span className="ml-[3px] flex h-[13px] w-[46px] items-center justify-center border-x border-b border-black bg-[#d4d2ce] text-[#333]">Feuille3</span>
      <span className="ml-[2px] flex h-[13px] w-[16px] items-center justify-center border-x border-b border-black bg-[#d4d2ce]">
        <Plus size={11} strokeWidth={4} className="stroke-[#5aa820]" />
      </span>
      <span className="ml-[42px] h-[13px] w-[2px] bg-black" />
      <div className="ml-[5px] flex h-[12px] w-[1564px] items-center rounded-full border border-[#bbb] bg-white">
        <span className="ml-[3px] h-0 w-0 border-y-[3px] border-r-[4px] border-y-transparent border-r-[#777]" />
        <div className="mx-[5px] h-full flex-1 rounded-full bg-gradient-to-b from-[#efeeec] to-[#dcdad6]" />
        <span className="mr-[3px] h-0 w-0 border-y-[3px] border-l-[4px] border-y-transparent border-l-[#777]" />
      </div>
      <span className="h-[13px] w-[3px] bg-black" />
    </div>
  );
}

function DrawToolbar() {
  return (
    <div className="flex h-[40px] items-center border-t border-b border-[#d8d6d2] bg-[#f2f1f0] pl-[4px]">
      <Handle />
      <span className="w-[13px] shrink-0" />
      <Tool w="w-[26px]">
        <svg width="14" height="22" viewBox="0 0 14 22"><path d="M2 1v16l4-3 3 7 3-1-3-7h5z" fill="#fff" stroke="#111" /></svg>
      </Tool>
      <Tool w="w-[7px]"><Sep /></Tool>
      <Tool w="w-[33px]"><svg width="18" height="22" viewBox="0 0 18 22"><path d="M2 21 16 1" stroke="#333" /></svg></Tool>
      <Tool w="w-[32px]"><svg width="20" height="10" viewBox="0 0 20 10"><path d="M0 5h14" stroke="#111" strokeWidth="1.500" /><path d="M13 1l6 4-6 4z" /></svg></Tool>
      <Tool w="w-[33px]"><span className="h-[20px] w-[21px] border border-[#345] bg-[#7297bd] shadow-[1px_1px_1px_#888]" /></Tool>
      <Tool w="w-[33px]"><span className="h-[21px] w-[21px] rounded-full border border-[#345] bg-[#7297bd] shadow-[1px_1px_1px_#888]" /></Tool>
      <Tool w="w-[33px]">
        <svg width="22" height="26" viewBox="0 0 22 26" fill="none"><path d="M1 2c1 10 4 18 8 22 3-5 5-12 6-20" stroke="#222" strokeWidth="1.500" /><path d="M13 20 19 3" stroke="#c8a030" strokeWidth="4" /><path d="M19 3l1-2" stroke="#c83020" strokeWidth="4" /></svg>
      </Tool>
      <Tool w="w-[33px]"><span className="font-['Liberation_Serif',serif] text-[26px] font-bold text-[#222]">T</span></Tool>
      <Tool w="w-[33px]">
        <svg width="24" height="26" viewBox="0 0 24 26" fill="#f6f6f4" stroke="#555"><path d="M12 1a11 10 0 0 1 0 20c-2 0-3 0-4-.5L3 25l1-7A11 10 0 0 1 12 1z" /><path d="M7 7h10M7 10h10M7 13h10M7 16h7" /></svg>
      </Tool>
      <Tool w="w-[7px]"><Sep /></Tool>
      <Tool w="w-[33px]"><svg width="24" height="30" viewBox="0 0 24 30"><path d="M12 1l11 14-11 14L1 15z" fill="#c8c8c6" stroke="#555" /></svg></Tool>
      <Tool w="w-[17px]"><Caret color="border-t-[#222]" /></Tool>
      <Tool w="w-[33px]">
        <svg width="24" height="30" viewBox="0 0 24 30"><ellipse cx="12" cy="15" rx="11" ry="14" fill="#d8d8d6" stroke="#555" /><path d="M7 19q5 3 10 0" fill="none" stroke="#666" /><circle cx="8" cy="11" r="1" /><circle cx="16" cy="11" r="1" /></svg>
      </Tool>
      <Tool w="w-[17px]"><Caret color="border-t-[#222]" /></Tool>
      <Tool w="w-[33px]"><svg width="24" height="18" viewBox="0 0 24 18"><path d="M1 9l6-7v4h10V2l6 7-6 7v-4H7v4z" fill="#ddd" stroke="#444" /></svg></Tool>
      <Tool w="w-[17px]"><Caret color="border-t-[#222]" /></Tool>
      <Tool w="w-[33px]"><svg width="22" height="32" viewBox="0 0 22 32"><rect x=".5" y=".5" width="21" height="31" fill="#e0e0de" stroke="#333" /><path d="M1 5h20M6 5v26" stroke="#888" /></svg></Tool>
      <Tool w="w-[17px]"><Caret color="border-t-[#222]" /></Tool>
      <Tool w="w-[33px]"><svg width="24" height="30" viewBox="0 0 24 30"><path d="M2 2h20v19H9l-7 8 1-8H2z" fill="#c8c8c6" stroke="#444" /></svg></Tool>
      <Tool w="w-[17px]"><Caret color="border-t-[#222]" /></Tool>
      <Tool w="w-[33px]"><svg width="24" height="26" viewBox="0 0 24 26"><path d="M12 1l3 9h8l-6 6 3 9-8-5-8 5 3-9-6-6h8z" fill="#e4e4e2" stroke="#444" /></svg></Tool>
      <Tool w="w-[17px]"><Caret color="border-t-[#222]" /></Tool>
    </div>
  );
}

function Calc() {
  return (
    <div className={`${UI_FONT} flex min-w-0 flex-1 flex-col`}>
      <div className="flex h-[28px] items-center gap-[18px] bg-[#3c3b37] pl-[8px] text-[14.5px] text-[#dfdbd2]">
        <span><u>F</u>ichier</span>
        <span><u>É</u>dition</span>
        <span><u>A</u>ffichage</span>
        <span><u>I</u>nsertion</span>
        <span>F<u>o</u>rmat</span>
        <span><u>O</u>utils</span>
        <span>Fe<u>n</u>être</span>
        <span>Ai<u>d</u>e</span>
      </div>
      <MainToolbar />
      <FormatToolbar />
      <div className="relative flex h-[869px] overflow-hidden bg-[#f2f1f0] pl-[1px]">
        <div className="font-['Liberation_Sans','Noto_Sans',sans-serif]">
          <Sheet />
        </div>
        <Scrollbars />
        {/* reference ranges and cell cursor lie over the grid */}
        <div className="absolute top-[21px] left-[42px] h-[16px] w-[100px] border-[1.5px] border-[#0000e0]" />
        <div className="absolute top-[37px] left-[42px] h-[160px] w-[100px] border-[1.5px] border-[#0000e0]" />
        <div className="absolute top-[37px] left-[142px] h-[160px] w-[83px] border-[1.5px] border-[#0000e0]" />
        <div className="absolute top-[21px] left-[225px] h-[16px] w-[82px] border-[1.5px] border-[#0000e0]" />
        <div className="absolute top-[37px] left-[225px] h-[160px] w-[82px] border-[1.5px] border-[#0000e0]" />
        <div className="absolute top-[21px] left-[142px] h-[17px] w-[83px] border-[1.5px] border-b-[3px] border-[#444]" />
        <div className="absolute top-[35px] left-[222px] h-[5px] w-[5px] bg-[#444]" />
        <Chart />
        <svg width="14" height="20" viewBox="0 0 14 20" className="absolute top-[373px] left-[1053px]">
          <path d="M1 1v15l4-3 3 6 2-1-3-6h5z" fill="#fff" stroke="#222" />
        </svg>
      </div>
      <SheetTabs />
      <DrawToolbar />
      <div className="flex h-[23px] items-center bg-[#f2f1f0] pl-[10px] text-[13px] text-[#3c3b37]">
        Zone du diagramme sélectionné
        <span className="ml-auto h-[16px] w-px bg-[#bbb]" />
        <Star size={10} className="mr-[12px] ml-[6px] fill-[#4a7ab0] stroke-[#d06030]" />
      </div>
    </div>
  );
}

export default function App() {
  return (
    <div className="flex h-[1080px] w-[3840px] flex-col overflow-hidden bg-[#3c3b37]">
      <TopPanel />
      <div className="flex min-h-0 flex-1">
        <Launcher />
        <div className="flex w-[1855px] shrink-0 flex-col">
          <ChromeBars />
          <GmailPage />
        </div>
        <Launcher />
        <Calc />
      </div>
    </div>
  );
}
